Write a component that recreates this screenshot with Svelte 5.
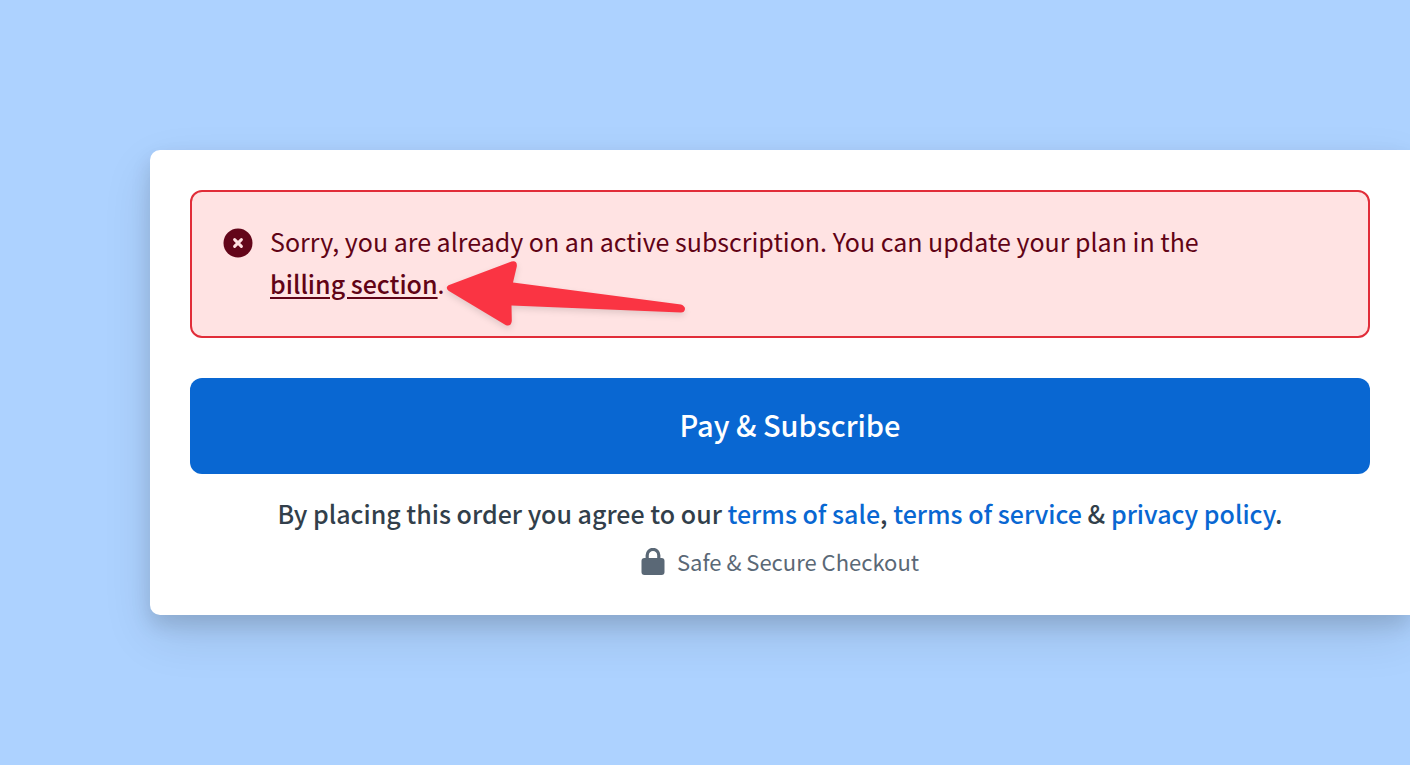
<script>
  export let message = 'Sorry, you are already on an active subscription. You can update your plan in the';

  function handleSubmit() {
    // Payment is blocked while the alert is shown
  }
</script>

<main class="page">
  <form class="checkout-card" on:submit|preventDefault={handleSubmit}>
    <!-- Error alert -->
    <div class="alert" role="alert">
      <svg class="alert-icon" viewBox="0 0 30 30" aria-hidden="true">
        <circle cx="15" cy="15" r="14.5" fill="#63061a" />
        <path d="M11.6 11.6l6.8 6.8M18.4 11.6l-6.8 6.8" stroke="#ffe1e2" stroke-width="3" stroke-linecap="round" />
      </svg>
      <p class="alert-text">
        {message}
        <br />
        <span class="link-wrap">
          <a class="billing-link" href="#billing">billing section</a>.
          <svg class="pointer" viewBox="0 0 244 72" aria-hidden="true">
            <path
              d="M3.5 26.2L66.5 2.4Q72.5 1 71.8 7.5L68 23.5L236 45.5Q240 47 240 50Q239.5 53.5 236 53.5L66.5 46.5L66.8 62Q66 67.8 61 66.2L3.5 31.7Q0 28.5 3.5 26.2Z"
              fill="#fa3443"
            />
          </svg>
        </span>
      </p>
    </div>

    <button class="pay-button" type="submit">Pay &amp; Subscribe</button>

    <p class="terms">
      By placing this order you agree to our
      <a href="#sale">terms of sale</a>, <a href="#service">terms of service</a> &amp;
      <a href="#privacy">privacy policy</a>.
    </p>

    <div class="secure">
      <svg class="lock" viewBox="0 0 24 27" aria-hidden="true">
        <path d="M6.2 12V7.2a5.8 5.8 0 0 1 11.6 0V12" fill="none" stroke="#5a6876" stroke-width="3.2" />
        <rect x="0.5" y="10" width="23" height="17" rx="3" fill="#5a6876" />
      </svg>
      <span>Safe &amp; Secure Checkout</span>
    </div>
  </form>
</main>

<style>
  :global(body) {
    background: #add2ff;
  }

  .page {
    padding: 150px 0 150px 150px;
    font-family: 'Noto Sans CJK JP', 'Noto Sans', sans-serif;
    overflow: hidden;
  }

  .checkout-card {
    padding: 40px;
    background: #fff;
    border-radius: 10px 0 0 10px;
    box-shadow: 0 10px 20px rgba(0, 0, 0, 0.12), 0 20px 50px rgba(0, 0, 0, 0.11);
  }

  /* Alert */
  .alert {
    display: flex;
    align-items: flex-start;
    gap: 17px;
    padding: 28px 31px 32px;
    border: 2px solid #e12d39;
    border-radius: 12px;
    background: #ffe3e3;
    color: #610316;
  }
  .alert-icon {
    flex: none;
    width: 30px;
    height: 30px;
    margin-top: 8px;
  }
  .alert-text {
    margin: 0;
    font-size: 25px;
    line-height: 42px;
  }
  .link-wrap {
    position: relative;
  }
  .billing-link {
    color: inherit;
    font-weight: 500;
    text-decoration: underline;
    text-decoration-thickness: 2px;
    text-underline-offset: 3px;
  }
  /* The arrow lies over the text and starts next to the link */
  .pointer {
    position: absolute;
    left: 100%;
    top: -6px;
    width: 244px;
    height: 72px;
    filter: drop-shadow(0 3px 3px rgba(0, 0, 0, 0.12));
    pointer-events: none;
  }

  .pay-button {
    display: block;
    width: 100%;
    height: 96px;
    margin-top: 40px;
    padding: 0 0 4px 20px;
    border: none;
    border-radius: 12px;
    background: #0967d2;
    color: #fff;
    font-family: inherit;
    font-size: 29px;
    font-weight: 500;
    cursor: pointer;
  }

  .terms {
    margin: 18px 0 14px;
    color: #323f4b;
    font-size: 25px;
    font-weight: 500;
    line-height: 42px;
    text-align: center;
  }
  .terms a {
    color: #0967d2;
    text-decoration: none;
  }

  .secure {
    display: flex;
    justify-content: center;
    gap: 12px;
    color: #5a6876;
    font-size: 22px;
    line-height: 27px;
  }
  .lock {
    width: 24px;
    height: 27px;
  }
</style>
